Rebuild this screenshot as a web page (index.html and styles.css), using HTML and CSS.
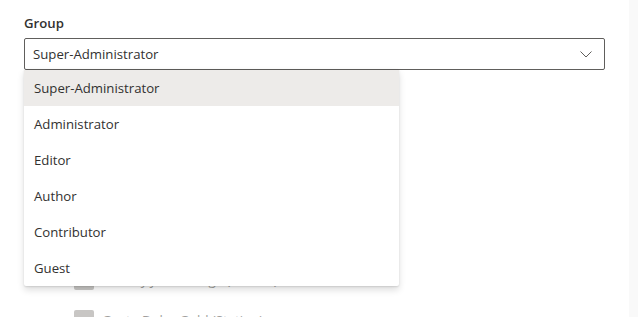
FILE: index.html
```html
<!DOCTYPE html>
<html>
  <head>
    <meta charset="utf-8">
    <title>Group</title>
    <link rel="stylesheet" href="styles.css">
  </head>
  <body>
    <div class="page">
      <div class="main">
        <label class="label">Group</label>
        <div class="field">
          <div class="dropdown">
            <span class="dropdown-title">Super-Administrator</span>
            <svg class="chevron" width="12" height="12" viewBox="0 0 12 12">
              <path d="M0.5 3.5 L6 9 L11.5 3.5" fill="none" stroke="#605e5c" stroke-width="1"/>
            </svg>
          </div>
          <div class="callout">
            <div class="option selected">Super-Administrator</div>
            <div class="option">Administrator</div>
            <div class="option">Editor</div>
            <div class="option">Author</div>
            <div class="option">Contributor</div>
            <div class="option">Guest</div>
          </div>
        </div>

        <!-- checklist behind the open dropdown -->
        <div class="checklist">
          <div class="check-row"><span class="box"></span><span class="check-text">Morning Show (Station)</span></div>
          <div class="check-row"><span class="box"></span><span class="check-text">Evening News (Station)</span></div>
          <div class="check-row"><span class="box"></span><span class="check-text">Weekend Mix (Station)</span></div>
          <div class="check-row"><span class="box"></span><span class="check-text">Classic Hits (Station)</span></div>
          <div class="check-row"><span class="box"></span><span class="check-text">Sunday Jazz Lounge (Station)</span></div>
          <div class="check-row"><span class="box"></span><span class="check-text">Gusto Dolor Gold (Station)</span></div>
        </div>
      </div>
      <div class="strip"></div>
    </div>
  </body>
</html>
```

FILE: styles.css
```css
html, body {
  margin: 0;
  padding: 0;
  background: #ffffff;
}
body {
  font-family: "Open Sans", "Noto Sans", sans-serif;
  font-size: 13.2px;
  color: #323130;
  overflow: hidden;
  height: 317px;
}
.page {
  display: flex;
  height: 317px;
}
.main {
  flex: 1;
  padding: 8px 24px 0 24px;
}
.strip {
  width: 9px;
  background: #f9f9f9;
}
.label {
  display: block;
  font-weight: 600;
  line-height: 20px;
  padding: 5px 0;
  color: #323130;
}
.field {
  position: relative;
}
.dropdown {
  display: flex;
  align-items: center;
  height: 30px;
  border: 1px solid #605e5c;
  border-radius: 2px;
  padding: 0 8px;
}
.dropdown-title {
  flex: 1;
  line-height: 30px;
}
.chevron {
  margin-right: 4px;
}
.callout {
  position: absolute;
  top: 32px;
  left: 0;
  width: 375px;
  background: #ffffff;
  border-radius: 0 0 2px 2px;
  box-shadow: 0 3.2px 7.2px 0 rgba(0,0,0,.132), 0 0.6px 1.8px 0 rgba(0,0,0,.108);
  z-index: 2;
}
.option {
  height: 36px;
  line-height: 36px;
  padding: 0 10px;
  color: #323130;
}
.option.selected {
  background: #edebe9;
}
.checklist {
  margin-top: 30px;
  padding-left: 50px;
}
.check-row {
  display: flex;
  align-items: center;
  gap: 8px;
  height: 40px;
  color: #a19f9d;
}
.box {
  width: 20px;
  height: 20px;
  border-radius: 2px;
  background: #c8c6c4;
}
```
